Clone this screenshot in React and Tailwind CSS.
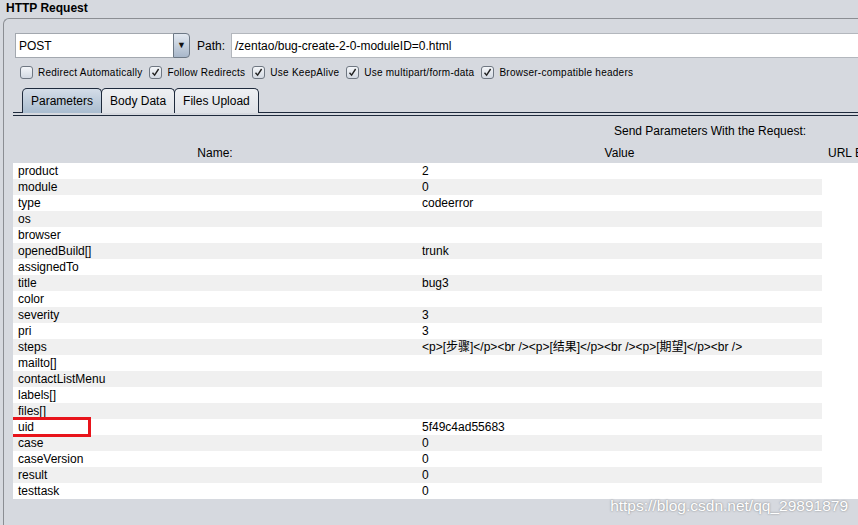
import React from "react";

const rows = [
  ["product", "2"],
  ["module", "0"],
  ["type", "codeerror"],
  ["os", ""],
  ["browser", ""],
  ["openedBuild[]", "trunk"],
  ["assignedTo", ""],
  ["title", "bug3"],
  ["color", ""],
  ["severity", "3"],
  ["pri", "3"],
  ["steps", "<p>[步骤]</p><br /><p>[结果]</p><br /><p>[期望]</p><br />"],
  ["mailto[]", ""],
  ["contactListMenu", ""],
  ["labels[]", ""],
  ["files[]", ""],
  ["uid", "5f49c4ad55683"],
  ["case", "0"],
  ["caseVersion", "0"],
  ["result", "0"],
  ["testtask", "0"],
];

const options = [
  ["Redirect Automatically", false],
  ["Follow Redirects", true],
  ["Use KeepAlive", true],
  ["Use multipart/form-data", true],
  ["Browser-compatible headers", true],
];

const CheckBox = ({ checked }) => (
  <span className="w-[13px] h-[13px] shrink-0 rounded-[3px] border border-[#6f7782] bg-gradient-to-b from-[#f4f6f9] to-[#d3d9e2] flex items-center justify-center">
    {checked && (
      <svg width="9" height="9" viewBox="0 0 9 9">
        <path d="M1.5 4.8 L3.6 7.2 L7.6 1" fill="none" stroke="#222" strokeWidth="1.4" />
      </svg>
    )}
  </span>
);

const Tab = ({ label, active }) => (
  <div
    className={
      "h-[25px] px-[8px] flex items-center text-[12px] border border-b-0 border-[#1e2a3c] rounded-t-[5px] -ml-px first:ml-0 " +
      (active
        ? "bg-gradient-to-b from-[#d4dde8] to-[#a9bccf]"
        : "bg-gradient-to-b from-[#eef0f3] to-[#dfe2e7]")
    }
  >
    {label}
  </div>
);

export default function App() {
  return (
    <div
      className="w-[858px] h-[525px] overflow-hidden bg-[#d6d9df] text-black flex flex-col relative"
      style={{ fontFamily: '"Liberation Sans", Arial, "Noto Sans CJK SC", sans-serif' }}
    >
      <div className="h-[18px] pl-[6px] text-[12px] font-bold leading-[17px]">HTTP Request</div>

      <div className="flex-1 ml-[3px] border-l border-t border-[#8b8e93] rounded-tl-[6px] flex flex-col">
        {/* method + path */}
        <div className="mt-[14px] flex items-center h-[25px]">
          <div className="ml-[11px] w-[175px] h-[25px] flex">
            <div className="flex-1 bg-white border border-[#a3a8af] border-r-0 text-[12px] pl-[3px] flex items-center">
              POST
            </div>
            <div className="w-[17px] border border-[#6d7885] rounded-r-[4px] bg-gradient-to-b from-[#e3e9f1] to-[#a8b7ca] flex items-center justify-center text-[9px] text-[#111]">
              ▼
            </div>
          </div>
          <span className="ml-[7px] text-[12px]">Path:</span>
          <div className="ml-[6px] flex-1 h-[25px] bg-white border border-[#b3b7bd] border-r-0 text-[12px] pl-[3px] flex items-center">
            /zentao/bug-create-2-0-moduleID=0.html
          </div>
        </div>

        {/* options */}
        <div className="mt-[7px] h-[14px] ml-[16px] flex items-center text-[10px]">
          {options.map(([label, checked]) => (
            <div key={label} className="flex items-center gap-[5px] mr-[7px]">
              <CheckBox checked={checked} />
              <span className="tracking-[0.25px]">{label}</span>
            </div>
          ))}
        </div>

        {/* tabs */}
        <div className="mt-[6px] ml-[9px] flex items-end">
          <div className="w-[10px] border-b border-[#1e2a3c] h-[28px] self-end" />
          <Tab label="Parameters" active />
          <Tab label="Body Data" />
          <Tab label="Files Upload" />
          <div className="flex-1 border-b border-[#1e2a3c]" />
        </div>
        <div className="ml-[9px] mt-[2px] border-t border-[#1e2a3c]" />

        {/* parameter table */}
        <div className="ml-[9px] text-[12px] overflow-hidden">
          <div className="h-[25px] pl-[601px] pt-[7px] leading-[16px] whitespace-nowrap">
            Send Parameters With the Request:
          </div>
          <div className="h-[22px] flex items-center pt-[2px] whitespace-nowrap">
            <div className="w-[404px] shrink-0 text-center">Name:</div>
            <div className="w-[405px] shrink-0 text-center">Value</div>
            <div className="pl-[6px] shrink-0">URL Encode?</div>
          </div>
          <div className="relative flex flex-col">
            {rows.map(([name, value], i) => (
              <div key={name} className="h-[16px] flex leading-[16px]">
                <div className={"w-[809px] shrink-0 flex " + (i % 2 ? "bg-[#f0f0f0]" : "bg-white")}>
                  <div className="w-[404px] pl-[5px]">{name}</div>
                  <div className="w-[405px] pl-[5px] whitespace-nowrap">{value}</div>
                </div>
                <div className="flex-1 bg-white" />
              </div>
            ))}
            <div className="absolute left-[-5px] top-[254px] w-[83px] h-[20px] border-[3px] border-[#e8141b]" />
          </div>
        </div>
      </div>

      <div className="absolute right-[10px] bottom-[8px] text-[15.5px] text-white [text-shadow:0_0_2px_rgba(110,110,110,0.9)]">
        https://blog.csdn.net/qq_29891879
      </div>
    </div>
  );
}
